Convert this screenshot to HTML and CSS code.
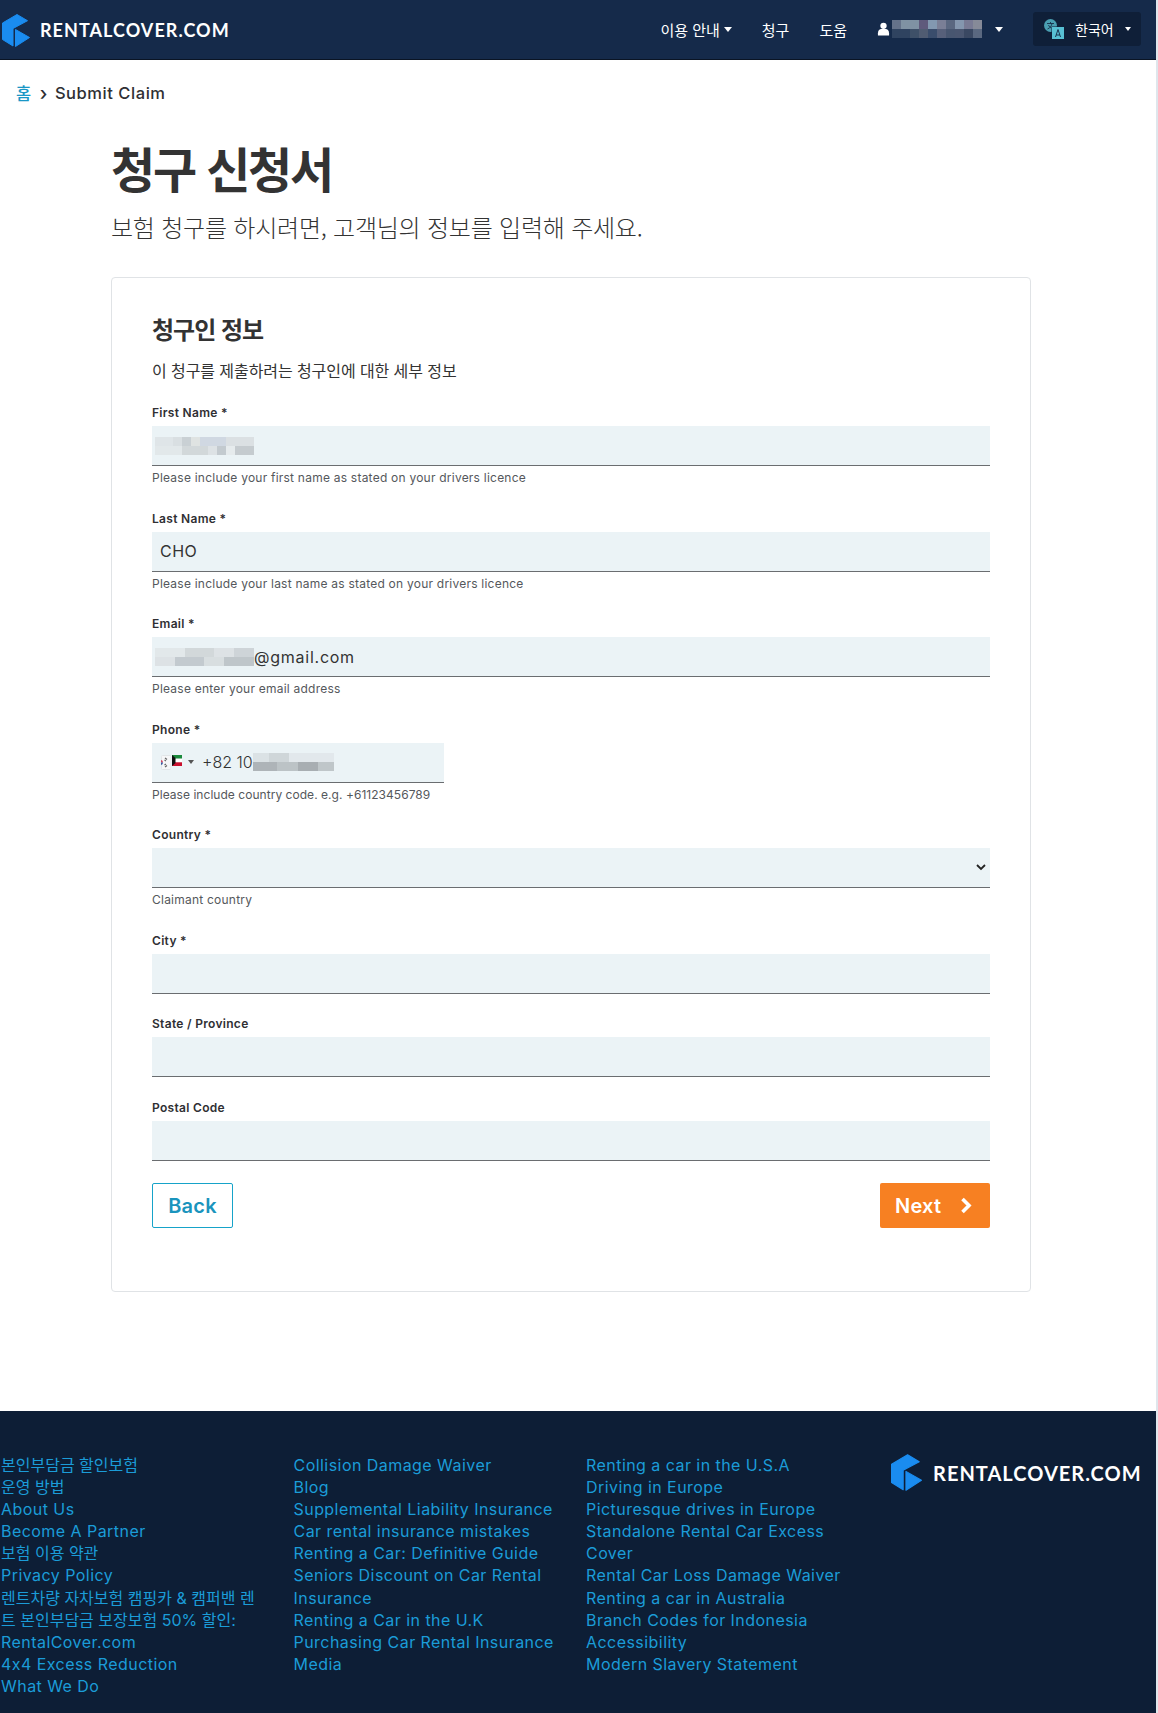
FILE: index.html
```html
<!DOCTYPE html>
<html lang="ko">
<head>
  <meta charset="utf-8">
  <title>Submit Claim</title>
  <link rel="stylesheet" href="styles.css">
</head>
<body>
  <header class="site-header">
    <a class="logo" href="#">
      <svg class="logo-mark" viewBox="0 0 28 33"><path fill="#1a8cf0" stroke="#1a8cf0" stroke-linejoin="round" d="M.5 9 15 .5l10.500 6.200L11 14.500V32L.5 25.500z"/><path fill="#1a8cf0" stroke="#1a8cf0" stroke-linejoin="round" d="M13.500 15.500l14 8-14 9z"/></svg>
      <span class="logo-text">RENTALCOVER.COM</span>
    </a>
    <nav class="main-nav">
      <a href="#">이용 안내<i class="caret"></i></a>
      <a href="#">청구</a>
      <a href="#">도움</a>
      <a class="user-link" href="#">
        <svg class="user-icon" viewBox="0 0 14 14"><circle cx="7" cy="3.600" r="3.400" fill="#fff"/><path fill="#fff" d="M1 14v-2.500C1 8.500 3 7 4.500 7h5C11 7 13 8.500 13 11.500V14z"/></svg>
        <span class="pixel pixel-nav"></span>
        <i class="caret caret-user"></i>
      </a>
      <button class="lang-btn">
        <svg class="lang-icon" viewBox="0 0 20 20"><circle cx="6.500" cy="6.500" r="6.500" fill="#4a9fb2"/><rect x="7.500" y="7.500" width="12.500" height="12.500" fill="#0f1f38"/><rect x="8" y="8" width="12" height="12" fill="#58c0d4"/><path d="M3 4.500h7M6.500 3v1.500M3.500 10c2.500-1 4-3 4.500-5.500M4.500 6c.5 1.500 1.500 2.500 2.500 3" fill="none" stroke="#12233f" stroke-width=".8"/><path d="M11.500 18l2.500-7.500 2.500 7.500M12.300 16h3.400" fill="none" stroke="#12233f" stroke-width=".9"/></svg>
        <span>한국어</span><i class="caret caret-lang"></i>
      </button>
    </nav>
  </header>

  <div class="breadcrumb"><a href="#">홈</a><span class="crumb-sep">›</span><span>Submit Claim</span></div>

  <main class="content">
    <h1>청구 신청서</h1>
    <p class="lead">보험 청구를 하시려면, 고객님의 정보를 입력해 주세요.</p>

    <form class="card">
      <h2>청구인 정보</h2>
      <p class="card-sub">이 청구를 제출하려는 청구인에 대한 세부 정보</p>

      <div class="field">
        <label>First Name *</label>
        <div class="input input-blur"><span class="pixel pixel-first"></span></div>
        <small>Please include your first name as stated on your drivers licence</small>
      </div>
      <div class="field">
        <label>Last Name *</label>
        <div class="input">CHO</div>
        <small>Please include your last name as stated on your drivers licence</small>
      </div>
      <div class="field">
        <label>Email *</label>
        <div class="input input-blur"><span class="pixel pixel-email"></span>@gmail.com</div>
        <small>Please enter your email address</small>
      </div>
      <div class="field">
        <label>Phone *</label>
        <div class="input input-phone">
          <span class="flag">
            <svg class="flag-kr" viewBox="0 0 10 15"><rect x=".5" y=".5" width="9.500" height="14" rx="1" fill="#f6f7f8" stroke="#e2e6e8"/><path d="M0 5a2.500 2.500 0 0 1 2 2.500H0z" fill="#d0405a"/><path d="M0 7.500h2A2.500 2.500 0 0 1 0 10z" fill="#3a5aa0"/><path d="M4 3l2 1.500M4 12l2-1.500M3.500 5l1.500 1M3.500 10l1.500-1" stroke="#666" stroke-width="1.200"/></svg>
            <svg class="flag-kw" viewBox="0 0 10 11"><rect width="10" height="3.700" fill="#1a8a3c"/><rect y="3.700" width="10" height="3.600" fill="#fff"/><rect y="7.300" width="10" height="3.700" fill="#c8102e"/><path d="M0 0l3.500 3v5L0 11z" fill="#111"/></svg>
          </span>
          <i class="caret caret-flag"></i>
          <span class="phone-num">+82 10</span><span class="pixel pixel-phone"></span>
        </div>
        <small class="help-tight">Please include country code. e.g. +61123456789</small>
      </div>
      <div class="field">
        <label>Country *</label>
        <div class="input input-select">
          <svg class="chevron" viewBox="0 0 10 7"><path d="M1 1l4 4 4-4" fill="none" stroke="#222" stroke-width="1.800"/></svg>
        </div>
        <small>Claimant country</small>
      </div>
      <div class="field field-plain">
        <label>City *</label>
        <div class="input"></div>
      </div>
      <div class="field field-plain">
        <label>State / Province</label>
        <div class="input"></div>
      </div>
      <div class="field field-plain">
        <label>Postal Code</label>
        <div class="input"></div>
      </div>

      <div class="form-actions">
        <button class="btn btn-back" type="button">Back</button>
        <button class="btn btn-next" type="button">Next
          <svg class="btn-arrow" viewBox="0 0 12 17"><path d="M2.500 2l6.500 6.500L2.500 15" fill="none" stroke="#fff" stroke-width="3.600"/></svg>
        </button>
      </div>
    </form>
  </main>

  <footer class="site-footer">
    <ul class="foot-col">
      <li class="ko"><a href="#">본인부담금 할인보험</a></li>
      <li class="ko"><a href="#">운영 방법</a></li>
      <li><a href="#">About Us</a></li>
      <li><a href="#">Become A Partner</a></li>
      <li class="ko"><a href="#">보험 이용 약관</a></li>
      <li><a href="#">Privacy Policy</a></li>
      <li><a href="#"><span class="ko">렌트차량 자차보험 캠핑카 &amp; 캠퍼밴 렌<br>트 본인부담금 보장보험 50% 할인:</span><br>RentalCover.com</a></li>
      <li><a href="#">4x4 Excess Reduction</a></li>
      <li><a href="#">What We Do</a></li>
    </ul>
    <ul class="foot-col">
      <li><a href="#">Collision Damage Waiver</a></li>
      <li><a href="#">Blog</a></li>
      <li><a href="#">Supplemental Liability Insurance</a></li>
      <li><a href="#">Car rental insurance mistakes</a></li>
      <li><a href="#">Renting a Car: Definitive Guide</a></li>
      <li><a href="#">Seniors Discount on Car Rental Insurance</a></li>
      <li><a href="#">Renting a Car in the U.K</a></li>
      <li><a href="#">Purchasing Car Rental Insurance</a></li>
      <li><a href="#">Media</a></li>
    </ul>
    <ul class="foot-col">
      <li><a href="#">Renting a car in the U.S.A</a></li>
      <li><a href="#">Driving in Europe</a></li>
      <li><a href="#">Picturesque drives in Europe</a></li>
      <li><a href="#">Standalone Rental Car Excess Cover</a></li>
      <li><a href="#">Rental Car Loss Damage Waiver</a></li>
      <li><a href="#">Renting a car in Australia</a></li>
      <li><a href="#">Branch Codes for Indonesia</a></li>
      <li><a href="#">Accessibility</a></li>
      <li><a href="#">Modern Slavery Statement</a></li>
    </ul>
    <a class="logo logo-foot" href="#">
      <svg class="logo-mark" viewBox="0 0 28 33"><path fill="#1a8cf0" stroke="#1a8cf0" stroke-linejoin="round" d="M.5 9 15 .5l10.500 6.200L11 14.500V32L.5 25.500z"/><path fill="#1a8cf0" stroke="#1a8cf0" stroke-linejoin="round" d="M13.500 15.500l14 8-14 9z"/></svg>
      <span class="logo-text">RENTALCOVER.COM</span>
    </a>
  </footer>
</body>
</html>
```

FILE: styles.css
```css
* {
  box-sizing: border-box;
}

html {
  background: #fff;
}

body {
  margin: 0;
  font-family: Inter, "Noto Sans CJK KR", sans-serif;
  color: #2f2f33;
  background: #fff;
  border-right: 2px solid #dfe6ec;
}

a {
  color: inherit;
  text-decoration: none;
}

.site-header {
  display: flex;
  align-items: center;
  justify-content: space-between;
  height: 60px;
  padding: 0 17px 1px 2px;
  background: #152a4a;
  border-bottom: 1px solid #0a1424;
  color: #fff;
  margin-right: -2px;
}

.logo {
  display: flex;
  align-items: center;
  gap: 10px;
  margin-top: 2px;
}

.logo-mark {
  width: 28px;
  height: 33px;
}

.logo-text {
  font-family: Lato, sans-serif;
  font-weight: 700;
  font-size: 18px;
  letter-spacing: 1.050px;
  color: #fff;
}

.main-nav {
  display: flex;
  align-items: center;
  font-family: "Noto Sans CJK KR", sans-serif;
  font-size: 15px;
}

.main-nav > a {
  display: flex;
  align-items: center;
  margin-right: 30px;
}

.caret {
  display: inline-block;
  width: 0;
  height: 0;
  margin-left: 4px;
  border-left: 4.500px solid transparent;
  border-right: 4.500px solid transparent;
  border-top: 5px solid #fff;
}

.caret-user {
  margin-left: 13px;
}

.caret-lang {
  margin-left: 11px;
  border-left-width: 3.500px;
  border-right-width: 3.500px;
  border-top-width: 4px;
}

.user-icon {
  width: 13px;
  height: 14px;
  margin-right: 2px;
}

.lang-btn {
  display: flex;
  align-items: center;
  flex: none;
  height: 34px;
  width: 108px;
  padding: 0 0 0 11px;
  background: #0f1f38;
  border: 0;
  border-radius: 3px;
  color: #fff;
  font: inherit;
  font-size: 14px;
  white-space: nowrap;
}

.lang-icon {
  flex: none;
  width: 20px;
  height: 20px;
  margin-right: 11px;
}

.pixel {
  display: inline-block;
  vertical-align: middle;
  flex: none;
}

.pixel-nav {
  width: 90px;
  height: 18px;
  background:
    linear-gradient(90deg, #64728a 0 10%, #7f92a3 10% 30%, #5f5a7c 30% 40%, #8298b0 40% 50%, #7a7f96 50% 60%, #5a6780 60% 70%, #8496ae 70% 80%, #787a94 80% 90%, #868a98 90%) top / 100% 50% no-repeat,
    linear-gradient(90deg, #2f4360 0 20%, #3e5068 20% 30%, #505c72 30% 40%, #3a4d6c 40% 50%, #57607a 50% 60%, #485670 60% 70%, #4a5670 70% 80%, #3a4862 80% 90%, #5a6880 90%) bottom / 100% 50% no-repeat;
}

.pixel-first {
  width: 99px;
  height: 18px;
  background:
    linear-gradient(90deg, #dfe5e8 0 18%, #d9dfe2 18% 27%, #c9d0d4 27% 36%, #dfe3e2 36% 45%, #d0d8e2 45% 72%, #dbe0e3 72%) top / 100% 50% no-repeat,
    linear-gradient(90deg, #e2e8ea 0 27%, #d2d8da 27% 54%, #dde2e5 54% 63%, #c3cacf 63% 72%, #e6ebed 72% 81%, #c5cbcf 81%) bottom / 100% 50% no-repeat;
}

.pixel-email {
  width: 99px;
  height: 18px;
  background:
    linear-gradient(90deg, #e2e8ea 0 30%, #d2d8da 30% 60%, #dde2e5 60% 80%, #ced4d8 80%) top / 100% 50% no-repeat,
    linear-gradient(90deg, #dde2e5 0 20%, #c3cacf 20% 50%, #d8dee0 50% 70%, #bfc6ca 70%) bottom / 100% 50% no-repeat;
}

.pixel-phone {
  width: 81px;
  height: 18px;
  background:
    linear-gradient(90deg, #dbe2e5 0 20%, #cfd6d9 20% 45%, #e2e8ec 45% 100%) top / 100% 50% no-repeat,
    linear-gradient(90deg, #aeb4b8 0 30%, #bcc3c6 30% 55%, #a8aeb2 55% 80%, #bfc6c9 80%) bottom / 100% 50% no-repeat;
}

.breadcrumb {
  display: flex;
  align-items: center;
  height: 66px;
  padding-left: 16px;
  font-size: 16.500px;
  font-weight: 500;
  letter-spacing: .55px;
}

.breadcrumb a {
  color: #1997c6;
}

.crumb-sep {
  margin: 0 7px 0 8px;
  font-size: 19px;
  line-height: 1;
}

.content {
  width: 920px;
  margin-left: 111px;
  padding-bottom: 119px;
}

h1 {
  margin: 5px 0 0;
  font-family: "Noto Sans CJK KR", sans-serif;
  font-size: 48px;
  font-weight: 700;
  line-height: 72px;
  letter-spacing: -2.200px;
  color: #333;
}

.lead {
  margin: 6px 0 0;
  font-family: "Noto Sans CJK KR", sans-serif;
  font-size: 24px;
  font-weight: 200;
  line-height: 36px;
  letter-spacing: -.22px;
  color: #333;
}

.card {
  margin-top: 32px;
  padding: 33px 40px 62px;
  height: 1015px;
  background: #fff;
  border: 1px solid #e0e3e6;
  border-radius: 4px;
}

h2 {
  margin: 0;
  font-family: "Noto Sans CJK KR", sans-serif;
  font-size: 24px;
  font-weight: 700;
  line-height: 36px;
  letter-spacing: -1px;
  color: #333;
}

.card-sub {
  margin: 11px 0 0;
  font-family: "Noto Sans CJK KR", sans-serif;
  font-size: 16px;
  line-height: 24px;
  letter-spacing: -.08px;
  color: #333;
}

.field {
  height: 105.500px;
}

.field:first-of-type {
  margin-top: 21px;
}

.field-plain {
  height: 83.500px;
}

.field label {
  display: block;
  font-size: 12px;
  font-weight: 600;
  line-height: 20px;
  color: #2f2f33;
  letter-spacing: .3px;
}

.input {
  display: flex;
  align-items: center;
  height: 40px;
  margin-top: 3px;
  padding-left: 8px;
  background: #ebf3f6;
  border-bottom: 1px solid #6a6d70;
  font-size: 16px;
  letter-spacing: .45px;
  color: #333;
}

.input-blur {
  padding-left: 3px;
  letter-spacing: .75px;
}

.input-phone {
  width: 292px;
  padding-left: 8px;
  font-weight: 300;
  letter-spacing: 0;
}

.input-select {
  justify-content: flex-end;
  padding-right: 4px;
}

.chevron {
  width: 10px;
  height: 7px;
}

.flag {
  display: flex;
  align-items: flex-start;
  height: 15px;
  margin-left: 1px;
}

.flag-kr {
  width: 10px;
  height: 15px;
}

.flag-kw {
  width: 10px;
  height: 11px;
  margin-left: 1px;
}

.caret-flag {
  margin: 0 0 0 6px;
  border-left-width: 3px;
  border-right-width: 3px;
  border-top: 4px solid #555;
}

.phone-num {
  margin-left: 8px;
}

.field small {
  display: block;
  margin-top: 4px;
  font-size: 12px;
  line-height: 16px;
  color: #55585c;
  letter-spacing: .23px;
}

.field small.help-tight {
  letter-spacing: .04px;
}

.form-actions {
  display: flex;
  justify-content: space-between;
  margin-top: 2px;
}

.btn {
  display: flex;
  align-items: center;
  height: 45px;
  border-radius: 2px;
  font-family: inherit;
  font-size: 20px;
  font-weight: 600;
  letter-spacing: .2px;
}

.btn-back {
  width: 81px;
  justify-content: center;
  padding: 0;
  background: #fff;
  border: 1px solid #16a3c9;
  color: #1a94bd;
}

.btn-next {
  width: 110px;
  padding: 0 0 0 15px;
  background: #f78022;
  border: 0;
  color: #fff;
}

.btn-arrow {
  width: 12px;
  height: 17px;
  margin-left: 19px;
}

.site-footer {
  display: flex;
  align-items: flex-start;
  height: 302px;
  padding: 43px 0 0 1px;
  background: #0d1e36;
  margin-right: -2px;
}

.foot-col {
  flex: none;
  width: 292.500px;
  margin: 0;
  padding: 0 25px 0 0;
  list-style: none;
  font-size: 16px;
  line-height: 22.100px;
  letter-spacing: .45px;
  color: #1b9cd8;
}

.foot-col .ko {
  letter-spacing: 0;
}

.logo-foot {
  gap: 11px;
  margin: 0 0 0 12.500px;
}

.logo-foot .logo-mark {
  width: 31px;
  height: 37px;
}

.logo-foot .logo-text {
  font-size: 20px;
  letter-spacing: 1.020px;
}
```
